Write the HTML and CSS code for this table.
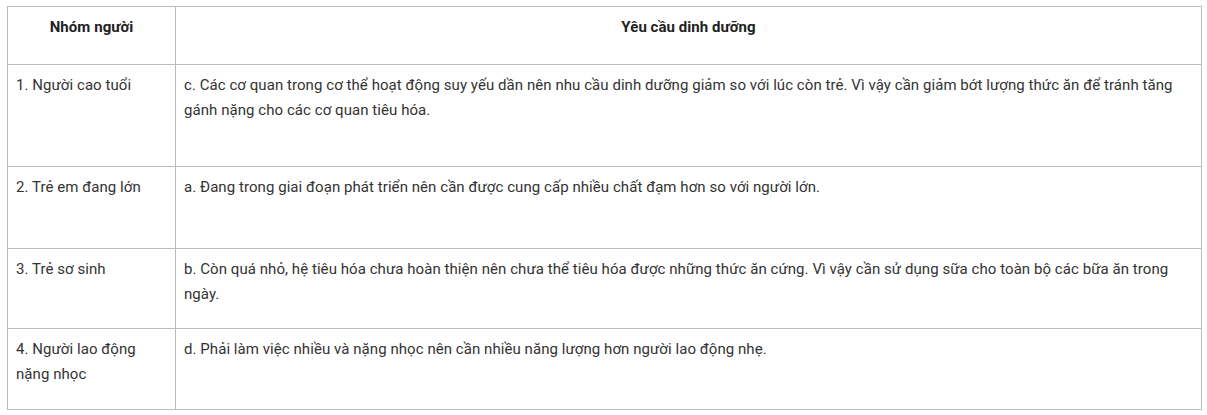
FILE: index.html
```html
<!DOCTYPE html>
<html lang="vi">
<head>
<meta charset="utf-8">
<link rel="stylesheet" href="styles.css">
</head>
<body>
<table class="tbl">
  <colgroup><col class="c1"><col class="c2"></colgroup>
  <tr class="r0">
    <th>Nhóm người</th>
    <th>Yêu cầu dinh dưỡng</th>
  </tr>
  <tr class="r1">
    <td>1. Người cao tuổi</td>
    <td>c. Các cơ quan trong cơ thể hoạt động suy yếu dần nên nhu cầu dinh dưỡng giảm so với lúc còn trẻ. Vì vậy cần giảm bớt lượng thức ăn để tránh tăng gánh nặng cho các cơ quan tiêu hóa.</td>
  </tr>
  <tr class="r2">
    <td>2. Trẻ em đang lớn</td>
    <td>a. Đang trong giai đoạn phát triển nên cần được cung cấp nhiều chất đạm hơn so với người lớn.</td>
  </tr>
  <tr class="r3">
    <td>3. Trẻ sơ sinh</td>
    <td>b. Còn quá nhỏ, hệ tiêu hóa chưa hoàn thiện nên chưa thể tiêu hóa được những thức ăn cứng. Vì vậy cần sử dụng sữa cho toàn bộ các bữa ăn trong ngày.</td>
  </tr>
  <tr class="r4">
    <td>4. Người lao động nặng nhọc</td>
    <td>d. Phải làm việc nhiều và nặng nhọc nên cần nhiều năng lượng hơn người lao động nhẹ.</td>
  </tr>
</table>
</body>
</html>
```
FILE: styles.css
```css
html, body {
  margin: 0;
  padding: 0;
  background: #fff;
}
body {
  padding: 6px 0 0 7px;
  font-family: Roboto, "Noto Sans", sans-serif;
  font-size: 15px;
  letter-spacing: 0.06px;
  color: #333;
}
.tbl {
  border-collapse: collapse;
  width: 1195px;
  table-layout: fixed;
}
.c1 { width: 168px; }
.tbl th, .tbl td {
  border: 1px solid #bbb;
  padding: 8px 8px 8px 8px;
  line-height: 25px;
  vertical-align: top;
  text-align: left;
}
.tbl th {
  font-weight: 700;
  color: #222;
  text-align: center;
}
.r0 { height: 58px; }
.r1 { height: 102px; }
.r2 { height: 82px; }
.r3 { height: 80px; }
.r4 { height: 81px; }
```
